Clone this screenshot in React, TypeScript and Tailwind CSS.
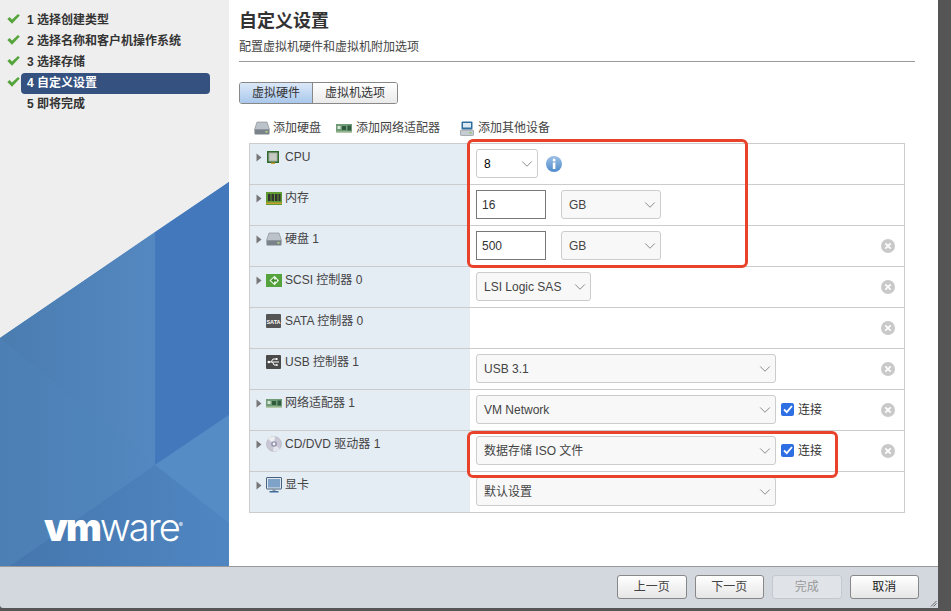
import React from 'react';
import { ChevronDown } from 'lucide-react';

const FONT = "font-['Liberation_Sans','Noto_Sans_CJK_SC',sans-serif]";

const Caret = () => (
  <svg width="6" height="9" viewBox="0 0 6 9" className="shrink-0">
    <path d="M0.5 0.5 L5.5 4.5 L0.5 8.5 Z" fill="#777" />
  </svg>
);

const CpuIcon = () => (
  <svg width="14" height="14" viewBox="0 0 14 14">
    <rect x="1" y="1" width="12" height="12" fill="#2f6a2c" />
    <rect x="2.5" y="2.5" width="9" height="9" fill="#a9b0a6" />
    <rect x="3.5" y="3.5" width="7" height="7" fill="#c6cac2" />
    <rect x="5" y="12.5" width="4" height="1.5" fill="#c8a032" />
  </svg>
);

const RamIcon = () => (
  <svg width="16" height="13" viewBox="0 0 16 13">
    <rect x="0" y="0" width="16" height="13" fill="#5f9b32" />
    <rect x="2" y="2" width="2.5" height="7" fill="#333" />
    <rect x="5.5" y="2" width="2.5" height="7" fill="#333" />
    <rect x="9" y="2" width="2.5" height="7" fill="#333" />
    <rect x="12.5" y="2" width="2" height="7" fill="#333" />
    <rect x="0" y="10.5" width="16" height="1.5" fill="#c8a032" />
  </svg>
);

const DiskIcon = () => (
  <svg width="16" height="14" viewBox="0 0 16 14">
    <path d="M3 1 H13 L15.5 8.5 H0.5 Z" fill="#bcc2c9" stroke="#7f868e" strokeWidth="0.6" />
    <rect x="0.5" y="8.5" width="15" height="5" rx="0.8" fill="#7a828a" />
    <rect x="11.5" y="10" width="2" height="1.5" fill="#b7e27a" />
  </svg>
);

const ScsiIcon = () => (
  <svg width="16" height="13" viewBox="0 0 16 13">
    <rect width="16" height="13" fill="#55a33d" />
    <path d="M3.5 6.5 L8.5 1.8 L13 6.5 L8.5 11.2 Z" fill="#eef6e8" />
    <path d="M5 6.5 L8 3.8 V5.5 H11 V7.5 H8 V9.2 Z" fill="#3c8a2b" />
  </svg>
);

const SataIcon = () => (
  <svg width="15" height="14" viewBox="0 0 15 14">
    <rect width="15" height="14" rx="1" fill="#555" />
    <text x="7.5" y="9.5" textAnchor="middle" fontSize="5.5" fontWeight="700" fill="#fff" fontFamily="Liberation Sans">
      SATA
    </text>
  </svg>
);

const UsbIcon = () => (
  <svg width="15" height="14" viewBox="0 0 15 14">
    <rect width="15" height="14" rx="1" fill="#4a4a4a" />
    <path d="M2 7 H13 M5 7 L7 4 H9.5 M6.5 7 L8 10 H10" stroke="#fff" strokeWidth="1" fill="none" />
    <circle cx="2.8" cy="7" r="1.3" fill="#fff" />
    <rect x="9.5" y="3" width="2" height="2" fill="#fff" />
    <circle cx="10.8" cy="10" r="1" fill="#fff" />
  </svg>
);

const NicIcon = () => (
  <svg width="16" height="9" viewBox="0 0 16 9">
    <rect width="16" height="9" fill="#6f9c76" />
    <rect x="1.5" y="2" width="3" height="3" fill="#d8e4d8" />
    <rect x="6" y="2" width="4" height="4" fill="#2f5a3c" />
    <rect x="11.5" y="1.5" width="3.5" height="5" fill="#335d42" />
    <rect x="0" y="7.5" width="16" height="1.5" fill="#b5c9a8" />
  </svg>
);

const CdIcon = () => (
  <svg width="16" height="16" viewBox="0 0 16 16">
    <circle cx="8" cy="8" r="7.5" fill="#c9c6d6" stroke="#a8a8b0" strokeWidth="0.5" />
    <path d="M8 8 L2 3 A7.5 7.5 0 0 1 9 0.6 Z" fill="#eceef2" />
    <path d="M8 8 L14 13 A7.5 7.5 0 0 1 7 15.4 Z" fill="#e4e6ee" />
    <circle cx="8" cy="8" r="2.8" fill="#8f8fa8" />
    <circle cx="8" cy="8" r="1.4" fill="#f4f4f6" />
  </svg>
);

const MonitorIcon = () => (
  <svg width="16" height="16" viewBox="0 0 16 16">
    <rect x="0.5" y="0.5" width="15" height="11.5" rx="0.5" fill="#dfe6ee" stroke="#46627f" />
    <rect x="2" y="2" width="12" height="8.5" fill="#7fa3c8" />
    <rect x="6.5" y="12" width="3" height="2" fill="#8a97a5" />
    <rect x="3.5" y="14" width="9" height="1.5" fill="#3f6c97" />
  </svg>
);

const StorageIcon = () => (
  <svg width="14" height="15" viewBox="0 0 14 15">
    <rect x="1.5" y="0.5" width="11" height="8" rx="1" fill="#2f6d9e" />
    <rect x="3" y="2" width="8" height="4.5" fill="#dce8f2" />
    <rect x="0.5" y="9" width="13" height="5.5" rx="0.8" fill="#c7ccd2" stroke="#7d858d" strokeWidth="0.6" />
    <rect x="9.5" y="11" width="2" height="1.5" fill="#8fbf5a" />
  </svg>
);

const InfoIcon = () => (
  <svg width="16" height="16" viewBox="0 0 16 16">
    <defs>
      <linearGradient id="info" x1="0" y1="0" x2="0" y2="1">
        <stop offset="0" stopColor="#9cc0e6" />
        <stop offset="1" stopColor="#4f8bcb" />
      </linearGradient>
    </defs>
    <circle cx="8" cy="8" r="8" fill="url(#info)" />
    <rect x="6.8" y="6.5" width="2.6" height="6.5" fill="#fff" />
    <circle cx="8.1" cy="4" r="1.5" fill="#fff" />
  </svg>
);

const RemoveIcon = () => (
  <svg width="14" height="14" viewBox="0 0 14 14" className="shrink-0">
    <circle cx="7" cy="7" r="7" fill="#c9c9c9" />
    <path d="M4.3 4.3 L9.7 9.7 M9.7 4.3 L4.3 9.7" stroke="#fff" strokeWidth="1.7" />
  </svg>
);

const Check = () => (
  <svg width="13" height="10" viewBox="0 0 13 10" className="shrink-0">
    <path d="M0.3 5 L2.6 3 L5 5.6 L11 0 L12.8 1.5 L5 9.8 Z" fill="#55a53c" />
  </svg>
);

const Select = ({ value, w, dark }: { value: string; w: string; dark?: boolean }) => (
  <div
    className={`${w} h-[29px] flex items-center justify-between pl-[7px] pr-[1px] border border-[#ccc] rounded-[3px] text-xs ${
      dark ? 'bg-white text-black' : 'bg-[#f8f8f8] text-[#444]'
    }`}
  >
    <span>{value}</span>
    <ChevronDown size={18} strokeWidth={0.9} className="text-[#555] shrink-0" />
  </div>
);

const SizeInput = ({ value }: { value: string }) => (
  <div className="w-[70px] h-[29px] flex items-center pl-[5px] border border-[#777] bg-white text-xs text-[#333]">
    {value}
  </div>
);

const Connect = () => (
  <div className="ml-[5px] flex items-center gap-1 text-xs text-[#333]">
    <span className="w-[13px] h-[13px] rounded-[2px] bg-[#2f6fe4] flex items-center justify-center">
      <svg width="10" height="9" viewBox="0 0 10 9">
        <path d="M1 4.5 L3.8 7.2 L9 1" stroke="#fff" strokeWidth="1.8" fill="none" />
      </svg>
    </span>
    连接
  </div>
);

type Row = {
  label: string;
  icon: React.ReactNode;
  expandable?: boolean;
  removable?: boolean;
  control?: React.ReactNode;
};

const rows: Row[] = [
  {
    label: 'CPU',
    icon: <CpuIcon />,
    expandable: true,
    control: (
      <>
        <Select value="8" w="w-[62px]" dark />
        <span className="ml-[8px]">
          <InfoIcon />
        </span>
      </>
    ),
  },
  {
    label: '内存',
    icon: <RamIcon />,
    expandable: true,
    control: (
      <>
        <SizeInput value="16" />
        <span className="ml-[15px]">
          <Select value="GB" w="w-[100px]" />
        </span>
      </>
    ),
  },
  {
    label: '硬盘 1',
    icon: <DiskIcon />,
    expandable: true,
    removable: true,
    control: (
      <>
        <SizeInput value="500" />
        <span className="ml-[15px]">
          <Select value="GB" w="w-[100px]" />
        </span>
      </>
    ),
  },
  {
    label: 'SCSI 控制器 0',
    icon: <ScsiIcon />,
    expandable: true,
    removable: true,
    control: <Select value="LSI Logic SAS" w="w-[115px]" />,
  },
  { label: 'SATA 控制器 0', icon: <SataIcon />, removable: true },
  {
    label: 'USB 控制器 1',
    icon: <UsbIcon />,
    removable: true,
    control: <Select value="USB 3.1" w="w-[300px]" />,
  },
  {
    label: '网络适配器 1',
    icon: <NicIcon />,
    expandable: true,
    removable: true,
    control: (
      <>
        <Select value="VM Network" w="w-[300px]" />
        <Connect />
      </>
    ),
  },
  {
    label: 'CD/DVD 驱动器 1',
    icon: <CdIcon />,
    expandable: true,
    removable: true,
    control: (
      <>
        <Select value="数据存储 ISO 文件" w="w-[300px]" />
        <Connect />
      </>
    ),
  },
  {
    label: '显卡',
    icon: <MonitorIcon />,
    expandable: true,
    control: <Select value="默认设置" w="w-[300px]" />,
  },
];

const steps = ['1 选择创建类型', '2 选择名称和客户机操作系统', '3 选择存储', '4 自定义设置', '5 即将完成'];

const Sidebar = () => (
  <aside className="relative w-[229px] shrink-0 bg-[#eeeeee] overflow-hidden">
    {/* background artwork */}
    <svg className="absolute inset-0" width="229" height="566" viewBox="0 0 229 566">
      <defs>
        <linearGradient id="mid" x1="0" y1="0" x2="1" y2="0">
          <stop offset="0" stopColor="#4a7cb0" />
          <stop offset="1" stopColor="#5488c0" />
        </linearGradient>
        <linearGradient id="left" x1="0" y1="0" x2="1" y2="0">
          <stop offset="0" stopColor="#4c7fb3" />
          <stop offset="1" stopColor="#558cc6" />
        </linearGradient>
        <linearGradient id="low" x1="0" y1="0" x2="1" y2="0">
          <stop offset="0" stopColor="#4677ae" />
          <stop offset="1" stopColor="#4f86c2" />
        </linearGradient>
      </defs>
      <polygon points="229,182 0,338 0,566 229,566" fill="url(#left)" />
      <polygon points="155,232 0,338 155,465" fill="url(#mid)" />
      <polygon points="229,182 155,232 155,465 229,415" fill="#4379bc" />
      <polygon points="155,465 229,415 229,523" fill="#558cc6" />
      <polygon points="155,465 10,566 229,566 229,523" fill="url(#low)" />
    </svg>
    <ul className="relative pt-[10px] pl-[7px] pr-[19px] flex flex-col">
      {steps.map((step, i) => (
        <li key={step} className="h-[21px] flex items-center">
          <span className="w-[14px] shrink-0 -mt-[3px]">{i < 4 && <Check />}</span>
          <span
            className={`flex-1 h-[21px] leading-[21px] rounded-[4px] pl-[6px] text-xs font-bold whitespace-nowrap ${
              i === 3 ? 'bg-[#34517f] text-white' : 'text-[#333]'
            }`}
          >
            {step}
          </span>
        </li>
      ))}
    </ul>
    <div className="absolute left-[44px] top-[502px] text-white text-[38px] leading-[46px] tracking-[-2px] font-['Inter',sans-serif]">
      <span className="font-black">vm</span>
      <span className="font-light">ware</span>
      <span className="text-[6px] align-super">®</span>
    </div>
  </aside>
);

const App = () => (
  <div className={`${FONT} w-[951px] h-[611px] bg-[#555] overflow-hidden`}>
    <div className="w-[938px] h-[608px] flex flex-col rounded-bl-[3px] overflow-hidden">
      <div className="h-[566px] flex">
        <Sidebar />
        <main className="relative flex-1 bg-white pl-[10px] pr-[23px] pt-[9px]">
          <h1 className="text-lg leading-[24px] font-semibold text-[#333]">自定义设置</h1>
          <p className="mt-[4px] text-xs leading-[20px] text-[#444]">配置虚拟机硬件和虚拟机附加选项</p>
          <div className="mt-[4px] border-t border-[#999]" />

          <div className="mt-[20px] flex w-[159px] h-[22px] rounded-[3px] border border-[#888] text-xs text-[#333] overflow-hidden">
            <div className="w-[73px] flex items-center justify-center bg-gradient-to-b from-[#dbe8f8] to-[#a9c8ec] border-r border-[#888]">
              虚拟硬件
            </div>
            <div className="flex-1 flex items-center justify-center bg-gradient-to-b from-white to-[#eaeaea]">
              虚拟机选项
            </div>
          </div>

          <div className="mt-[12px] h-[24px] pl-[15px] flex items-center text-xs text-[#444]">
            <DiskIcon />
            <span className="ml-[3px]">添加硬盘</span>
            <span className="ml-[15px]">
              <NicIcon />
            </span>
            <span className="ml-[4px]">添加网络适配器</span>
            <span className="ml-[20px]">
              <StorageIcon />
            </span>
            <span className="ml-[4px]">添加其他设备</span>
          </div>

          <div className="ml-[10px] mt-[3px] w-[656px] border-x border-t border-[#ccc]">
            {rows.map((row) => (
              <div key={row.label} className="h-[41px] flex border-b border-[#ccc]">
                <div className="w-[220px] shrink-0 bg-[#e4ecf4] pl-[6px] pt-[5px] flex items-start text-xs text-[#444]">
                  <span className="w-[10px] h-[16px] flex items-center">{row.expandable && <Caret />}</span>
                  <span className="w-[19px] h-[16px] flex items-center">{row.icon}</span>
                  <span className="leading-[16px] whitespace-nowrap">{row.label}</span>
                </div>
                <div className="flex-1 flex items-center pl-[6px] pr-[9px] pb-[1px]">
                  {row.control}
                  {row.removable && (
                    <span className="ml-auto">
                      <RemoveIcon />
                    </span>
                  )}
                </div>
              </div>
            ))}
          </div>

          {/* red annotations drawn over the table */}
          <div className="absolute left-[238px] top-[139px] w-[281px] h-[129px] border-[3px] border-[#e8432a] rounded-[6px]" />
          <div className="absolute left-[238px] top-[431px] w-[371px] h-[47px] border-[3px] border-[#e8432a] rounded-[6px]" />
        </main>
      </div>

      <footer className="relative h-[42px] bg-[#d3d7de] border-t border-[#999] flex items-center justify-end gap-2 pr-[19px] pb-[2px] text-xs">
        {['上一页', '下一页', '完成', '取消'].map((label) => (
          <div
            key={label}
            className={`w-[69.5px] h-[24px] rounded-[3px] border flex items-center justify-center ${
              label === '完成'
                ? 'border-[#c4c8cf] bg-[#e0e3e8] text-[#999]'
                : `border-[#888] bg-gradient-to-b from-white to-[#e6e6e6] ${label === '取消' ? 'text-[#222]' : 'text-[#444]'}`
            }`}
          >
            {label}
          </div>
        ))}
        <svg className="absolute right-[1px] bottom-[1px]" width="7" height="7" viewBox="0 0 7 7">
          <path d="M1 6.5 L6.5 1 M3.5 6.5 L6.5 3.5" stroke="#666" strokeWidth="1" />
        </svg>
      </footer>
    </div>
  </div>
);

export default App;
